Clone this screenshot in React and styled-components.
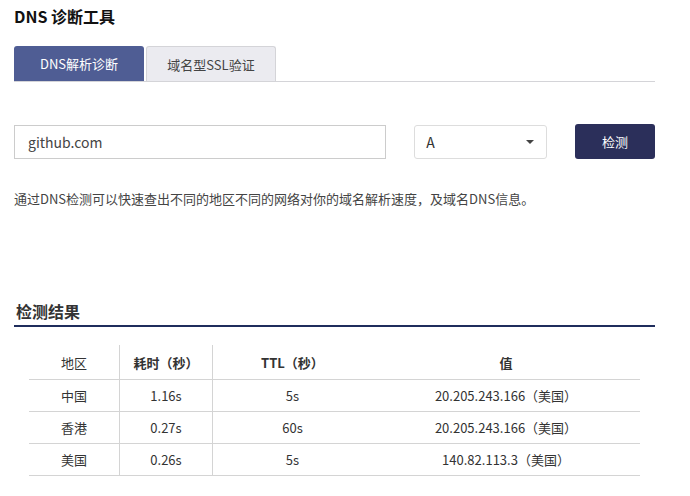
import React from "react";
import styled, { createGlobalStyle } from "styled-components";

const Global = createGlobalStyle`
  body { margin: 0; font-family: "Noto Sans CJK SC", "Noto Sans", sans-serif; color: #333; background: #fff; }
`;
const Page = styled.div`padding: 4px 35px 0 14px; width: 641px;`;
const Title = styled.h1`margin: 0; font-size: 16px; font-weight: 700; color: #111; line-height: 24px;`;
const Tabs = styled.div`display: flex; gap: 2px; margin-top: 18px; border-bottom: 1px solid #d4d4d8;`;
const Tab = styled.div`
  height: 35px; box-sizing: border-box; display: flex; align-items: center; justify-content: center;
  font-size: 13px; border-radius: 3px 3px 0 0;
  width: ${p => p.w}px;
  background: ${p => p.active ? "#4f5d94" : "#ebebf0"};
  color: ${p => p.active ? "#fff" : "#444"};
  border: ${p => p.active ? "none" : "1px solid #d4d4d8"};
  border-bottom: none;
`;
const Form = styled.div`display: flex; align-items: center; margin-top: 42px;`;
const Input = styled.div`
  width: 373px; height: 34px; box-sizing: border-box; border: 1px solid #ccc;
  display: flex; align-items: center; padding-left: 13px; font-size: 14px; color: #444;
`;
const Select = styled.div`
  margin-left: 28px; width: 133px; height: 34px; box-sizing: border-box; border: 1px solid #ddd; border-radius: 3px;
  display: flex; align-items: center; justify-content: space-between; padding: 0 12px 0 11px; font-size: 14px; color: #333;
`;
const Caret = styled.span`width:0;height:0;border-left:4px solid transparent;border-right:4px solid transparent;border-top:4px solid #444;`;
const Button = styled.div`
  margin-left: 28px; width: 80px; height: 35px; background: #2b2f5a; color: #fff; border-radius: 3px;
  display: flex; align-items: center; justify-content: center; font-size: 13px;
`;
const Desc = styled.p`margin: 30px 0 0; font-size: 13px; color: #444; line-height: 20px;`;
const SectionTitle = styled.h2`
  margin: 90px 0 0; padding: 0 0 2px 2px; font-size: 16px; font-weight: 700; color: #333; line-height: 24px;
  border-bottom: 2px solid #1f2d5c;
`;
const Table = styled.table`margin: 18px 0 0 15px; width: 611px; border-collapse: collapse; font-size: 13px; color: #333;`;
const Th = styled.th`
  height: 34px; font-weight: ${p => p.plain ? 400 : 700}; text-align: center;
  border-bottom: 1px solid #d4d4d4; border-right: ${p => p.sep ? "1px solid #d4d4d4" : "none"};
  width: ${p => p.w}px; padding: 0;
`;
const Td = styled.td`
  height: 31px; text-align: center; padding: 0;
  border-bottom: 1px solid #d4d4d4; border-right: ${p => p.sep ? "1px solid #d4d4d4" : "none"};
`;

const rows = [
  ["中国", "1.16s", "5s", "20.205.243.166（美国）"],
  ["香港", "0.27s", "60s", "20.205.243.166（美国）"],
  ["美国", "0.26s", "5s", "140.82.113.3（美国）"],
];

export default function App() {
  return (
    <Page>
      <Global />
      <Title>DNS 诊断工具</Title>
      <Tabs>
        <Tab active w={130}>DNS解析诊断</Tab>
        <Tab w={130}>域名型SSL验证</Tab>
      </Tabs>
      <Form>
        <Input>github.com</Input>
        <Select>A<Caret /></Select>
        <Button>检测</Button>
      </Form>
      <Desc>通过DNS检测可以快速查出不同的地区不同的网络对你的域名解析速度，及域名DNS信息。</Desc>
      <SectionTitle>检测结果</SectionTitle>
      <Table>
        <thead>
          <tr>
            <Th plain sep w={90}>地区</Th>
            <Th sep w={92}>耗时（秒）</Th>
            <Th w={159}>TTL（秒）</Th>
            <Th>值</Th>
          </tr>
        </thead>
        <tbody>
          {rows.map(r => (
            <tr key={r[0]}>
              <Td sep>{r[0]}</Td><Td sep>{r[1]}</Td><Td>{r[2]}</Td><Td>{r[3]}</Td>
            </tr>
          ))}
        </tbody>
      </Table>
    </Page>
  );
}
